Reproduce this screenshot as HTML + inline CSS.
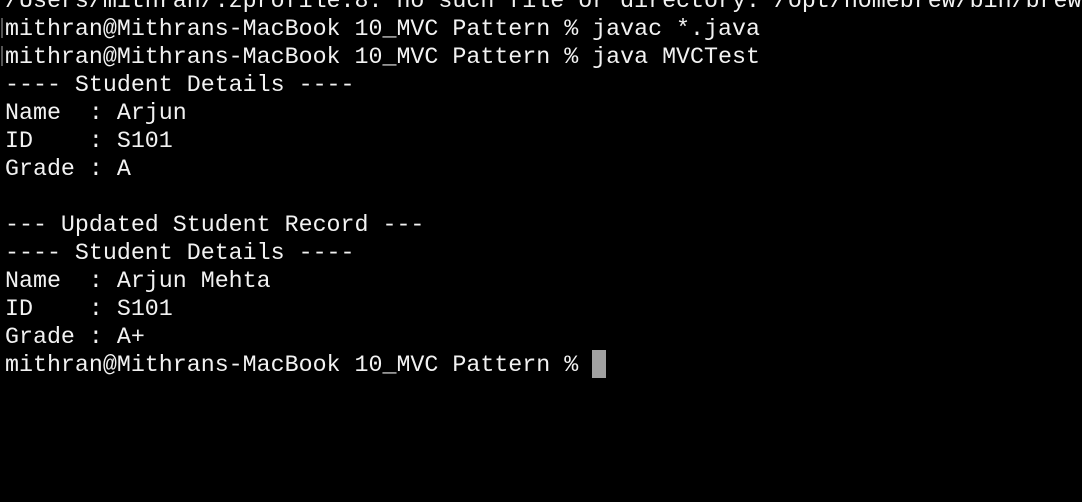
<!DOCTYPE html>
<html><head><style>
html,body{margin:0;padding:0;background:#000;width:1082px;height:502px;overflow:hidden}
pre{margin:0;position:absolute;left:5px;top:-13px;font-family:"Liberation Mono",monospace;font-size:23.3px;line-height:28px;color:#f2f2f2;white-space:pre}
.cur{display:inline-block;width:14px;height:28px;background:#a0a0a0;vertical-align:top;position:relative;top:-1px}
.m{position:absolute;left:1px;width:2px;height:20px;background:#555}
</style></head><body>
<div class="m" style="top:18px"></div><div class="m" style="top:46px"></div>
<pre>/Users/mithran/.zprofile:8: no such file or directory: /opt/homebrew/bin/brew
mithran@Mithrans-MacBook 10_MVC Pattern % javac *.java
mithran@Mithrans-MacBook 10_MVC Pattern % java MVCTest
---- Student Details ----
Name  : Arjun
ID    : S101
Grade : A

--- Updated Student Record ---
---- Student Details ----
Name  : Arjun Mehta
ID    : S101
Grade : A+
mithran@Mithrans-MacBook 10_MVC Pattern % <span class="cur"></span></pre>
</body></html>
